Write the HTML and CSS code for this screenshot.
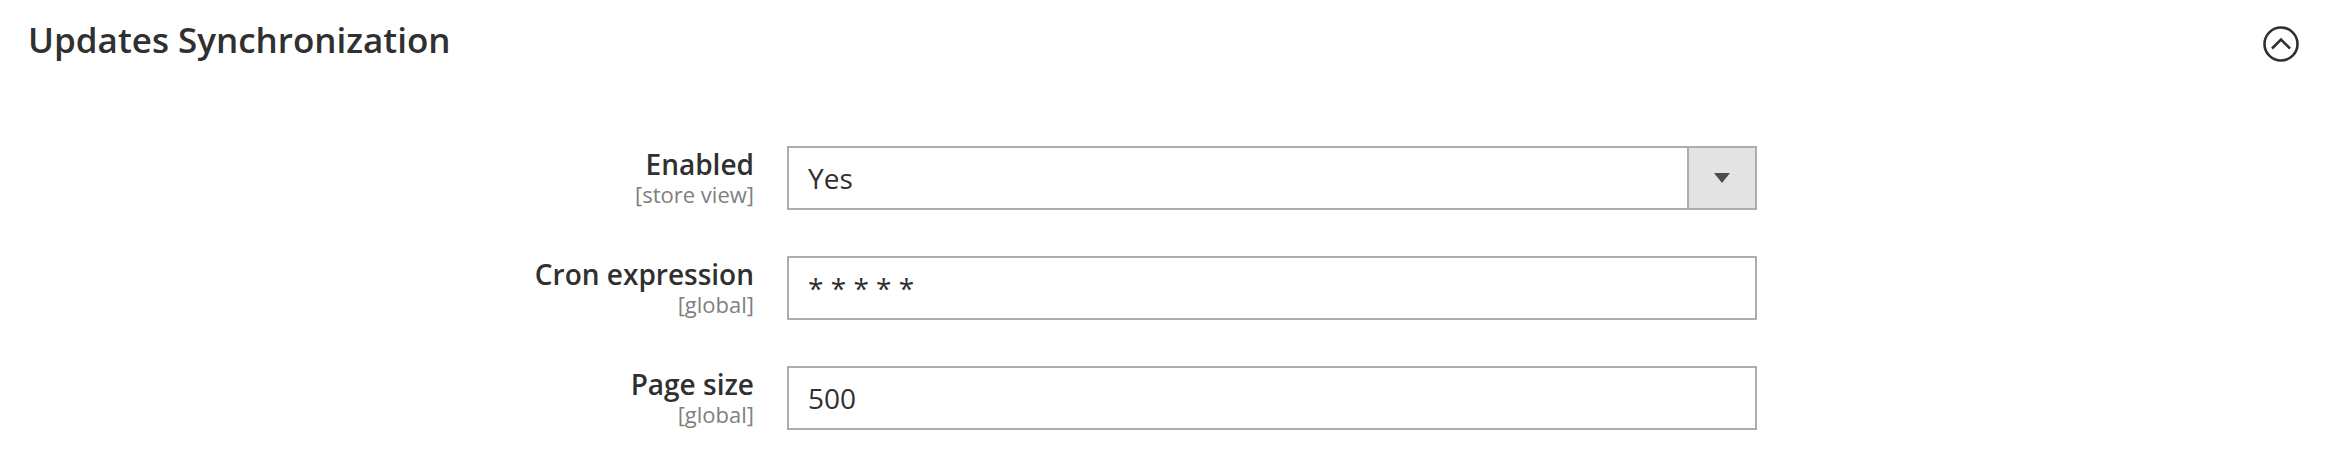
FILE: index.html
```html
<!DOCTYPE html>
<html lang="en">
<head>
    <meta charset="UTF-8">
    <meta name="viewport" content="width=device-width, initial-scale=1.0">
    <title>Updates Synchronization</title>
    <link rel="stylesheet" href="styles.css">
</head>
<body>
    <div class="section">
        <div class="section-header">
            <h2 class="section-title">Updates Synchronization</h2>
            <span class="collapse-toggle">
                <svg width="36" height="36" viewBox="0 0 36 36">
                    <circle cx="18" cy="18" r="16.5" fill="none" stroke="#303030" stroke-width="2.6"/>
                    <path d="M9 22.5 L18 13.5 L27 22.5" fill="none" stroke="#303030" stroke-width="2.6"/>
                </svg>
            </span>
        </div>
        <div class="fields">
            <div class="field">
                <div class="field-label">
                    <span class="label-text">Enabled</span>
                    <span class="scope">[store view]</span>
                </div>
                <div class="control">
                    <div class="select">
                        <span class="select-value">Yes</span>
                        <span class="select-action"><span class="arrow"></span></span>
                    </div>
                </div>
            </div>
            <div class="field">
                <div class="field-label">
                    <span class="label-text">Cron expression</span>
                    <span class="scope">[global]</span>
                </div>
                <div class="control">
                    <input class="text-input" type="text" value="* * * * *">
                </div>
            </div>
            <div class="field">
                <div class="field-label">
                    <span class="label-text">Page size</span>
                    <span class="scope">[global]</span>
                </div>
                <div class="control">
                    <input class="text-input" type="text" value="500">
                </div>
            </div>
        </div>
    </div>
</body>
</html>
```

FILE: styles.css
```css
body {
    margin: 0;
    background-color: #fff;
    font-family: "Open Sans", "Liberation Sans", sans-serif;
    color: #303030;
}
.section-header {
    display: flex;
    justify-content: space-between;
    align-items: flex-start;
    padding: 17px 37px 0 28px;
}
.section-title {
    margin: 0;
    font-size: 35px;
    font-weight: 600;
    line-height: 46px;
    color: #303030;
}
.collapse-toggle {
    display: block;
    width: 36px;
    height: 36px;
    margin-top: 9px;
}
.collapse-toggle svg {
    display: block;
}
.fields {
    padding-top: 83px;
}
.field {
    display: flex;
    gap: 33px;
    margin-bottom: 46px;
}
.field-label {
    width: 754px;
    display: flex;
    flex-direction: column;
    align-items: flex-end;
    text-align: right;
}
.label-text {
    font-size: 28px;
    font-weight: 600;
    line-height: 36px;
}
.scope {
    font-size: 22px;
    line-height: 25px;
    color: #808080;
}
.control {
    width: 970px;
}
.select,
.text-input {
    box-sizing: border-box;
    width: 100%;
    height: 64px;
    border: 2px solid #adadad;
    background: #fff;
}
.select {
    display: flex;
}
.select-value {
    flex: 1;
    padding-left: 19px;
    font-size: 28px;
    line-height: 60px;
}
.select-action {
    width: 66px;
    border-left: 2px solid #adadad;
    background-color: #e3e3e3;
    display: flex;
    justify-content: center;
    align-items: center;
}
.arrow {
    width: 0;
    height: 0;
    border-left: 8px solid transparent;
    border-right: 8px solid transparent;
    border-top: 10px solid #514943;
}
.text-input {
    display: block;
    margin: 0;
    padding: 0 19px;
    font-family: "Open Sans", "Liberation Sans", sans-serif;
    font-size: 28px;
    line-height: 60px;
    color: #303030;
    outline: none;
}
```
